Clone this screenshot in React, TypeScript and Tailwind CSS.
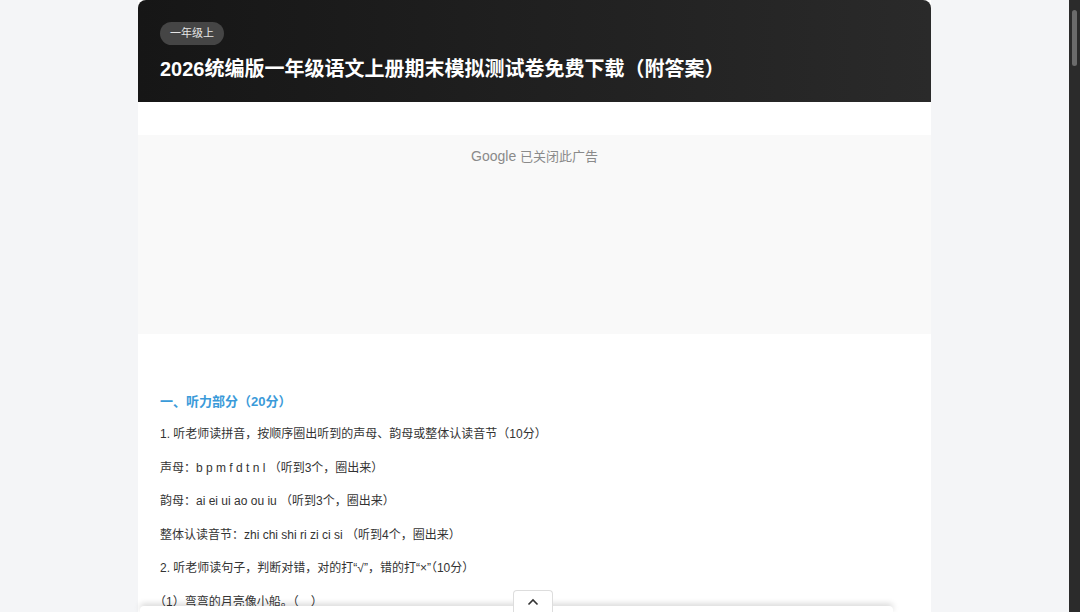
import React from "react";

const lines = [
  "1. 听老师读拼音，按顺序圈出听到的声母、韵母或整体认读音节（10分）",
  "声母：b p m f d t n l （听到3个，圈出来）",
  "韵母：ai ei ui ao ou iu （听到3个，圈出来）",
  "整体认读音节：zhi chi shi ri zi ci si （听到4个，圈出来）",
  "2. 听老师读句子，判断对错，对的打“√”，错的打“×”（10分）",
  "（1）弯弯的月亮像小船。（　）",
];

export default function App() {
  return (
    <div className="relative flex h-[612px] w-[1080px] overflow-hidden bg-[#f4f5f7]" style={{ fontFamily: '"Liberation Sans", "Noto Sans CJK SC", sans-serif' }}>
      <div className="flex flex-1 justify-start pl-[138px]">
        <div className="flex w-[793px] flex-col bg-white">
          <div className="flex h-[102px] flex-col rounded-t-[8px] bg-gradient-to-r from-[#161616] to-[#2a2a2a] px-[22px] pt-[22px]">
            <span className="self-start rounded-full bg-[#454545] px-[10px] py-[4px] text-[11px] leading-[15px] text-[#e5e5e5]">一年级上</span>
            <h1 className="mt-[11px] text-[20px] font-bold leading-[26px] text-white">2026统编版一年级语文上册期末模拟测试卷免费下载（附答案）</h1>
          </div>
          <div className="h-[34px]" />
          <div className="flex h-[199px] justify-center bg-[#f9f9f9] pt-[11px]">
            <span className="text-[13px] text-[#8a8a8a]"><span className="text-[14px]">Google</span> 已关闭此广告</span>
          </div>
          <div className="flex flex-col gap-[14px] px-[22px] pt-[58px] text-[12px] leading-[19.5px] text-[#333]">
            <div className="text-[13px] font-bold text-[#3a9ad9]">一、听力部分（20分）</div>
            {lines.map((l) => (
              <div key={l} className={l.startsWith("（") ? "-ml-[6px]" : ""}>{l}</div>
            ))}
          </div>
        </div>
      </div>
      <div className="w-[11px] bg-[#2b2b2b] pt-[10px]">
        <div className="mx-auto h-[56px] w-[5px] rounded-full bg-[#6b6b6b]" />
      </div>
      <div className="absolute bottom-0 left-[140px] h-[6px] w-[753px] rounded-t-[4px] bg-white shadow-[0_-2px_6px_rgba(0,0,0,0.18)]" />
      <div className="absolute bottom-0 left-[513px] flex h-[22px] w-[40px] items-center justify-center rounded-t-[4px] border border-b-0 border-[#ddd] bg-white">
        <svg width="12" height="8" viewBox="0 0 12 8" fill="none" stroke="#333" strokeWidth="1.6"><path d="M1.5 6.5 6 2l4.5 4.5" /></svg>
      </div>
    </div>
  );
}
